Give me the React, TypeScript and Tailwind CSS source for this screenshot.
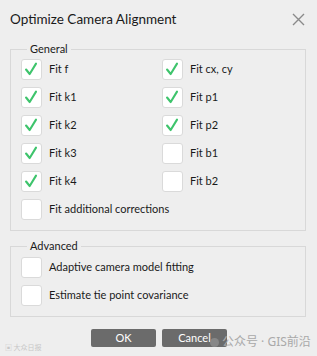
const general: { left: string; right: string; leftOn: boolean; rightOn: boolean }[] = [
  { left: "Fit f", leftOn: true, right: "Fit cx, cy", rightOn: true },
  { left: "Fit k1", leftOn: true, right: "Fit p1", rightOn: true },
  { left: "Fit k2", leftOn: true, right: "Fit p2", rightOn: true },
  { left: "Fit k3", leftOn: true, right: "Fit b1", rightOn: false },
  { left: "Fit k4", leftOn: true, right: "Fit b2", rightOn: false },
];

function Check({ on, label }: { on: boolean; label: string }) {
  return (
    <div className="flex items-center gap-[7px] h-[21px]">
      <div className="w-[21px] h-[21px] shrink-0 rounded-[3px] border border-[#dadada] bg-white flex items-center justify-center">
        {on && (
          <svg width="21" height="21" viewBox="0 0 21 21">
            <polyline
              points="4.5,10.5 8.5,15.5 15.5,4"
              fill="none"
              stroke="#3ec46c"
              strokeWidth="2.3"
              strokeLinecap="round"
              strokeLinejoin="round"
            />
          </svg>
        )}
      </div>
      <span className="text-[11px] text-[#1a1a1a] whitespace-nowrap">{label}</span>
    </div>
  );
}

export default function App() {
  return (
    <div
      className="relative w-[317px] h-[356px] bg-[#eeeeee] overflow-hidden"
      style={{ fontFamily: 'Lato, "Noto Sans", sans-serif' }}
    >
      {/* Title bar */}
      <div className="flex items-center justify-between h-[20px] mt-[9px] pl-[10px] pr-[12px]">
        <span className="text-[13.5px] leading-[20px] text-[#1a1a1a]">Optimize Camera Alignment</span>
        <svg width="13" height="13" viewBox="0 0 13 13">
          <path d="M1 1 L12 12 M12 1 L1 12" stroke="#8a8a8a" strokeWidth="1.4" />
        </svg>
      </div>

      {/* General */}
      <fieldset className="mt-[12px] ml-[10px] w-[296px] border border-[#d8d8d8] pl-[10px] pt-[2px] pb-[10px]">
        <legend className="ml-[6px] px-[3px] text-[11px] leading-[16px] text-[#1a1a1a]">General</legend>
        <div className="grid grid-cols-[141px_1fr] gap-y-[7px]">
          {general.map((r) => (
            <div key={r.left} className="contents">
              <Check on={r.leftOn} label={r.left} />
              <Check on={r.rightOn} label={r.right} />
            </div>
          ))}
          <div className="col-span-2">
            <Check on={false} label="Fit additional corrections" />
          </div>
        </div>
      </fieldset>

      {/* Advanced */}
      <fieldset className="mt-[7px] ml-[10px] w-[296px] border border-[#d8d8d8] pl-[10px] pt-[3px] pb-[10px]">
        <legend className="ml-[6px] px-[3px] text-[11px] leading-[16px] text-[#1a1a1a]">Advanced</legend>
        <div className="flex flex-col gap-[7px]">
          <Check on={false} label="Adaptive camera model fitting" />
          <Check on={false} label="Estimate tie point covariance" />
        </div>
      </fieldset>

      {/* Buttons */}
      <div className="flex justify-center gap-[6px] mt-[12px] pl-[1px]">
        <button className="w-[65px] h-[18px] rounded-[2px] bg-[#6b6b6b] text-white text-[11px] leading-[18px]">OK</button>
        <button className="w-[65px] h-[18px] rounded-[2px] bg-[#6b6b6b] text-white text-[11px] leading-[18px]">Cancel</button>
      </div>

      {/* Watermark */}
      <div className="absolute left-[210px] top-[334px] flex items-center gap-[3px] text-[12px] leading-[16px] text-[#a9a9a9]" style={{ fontFamily: '"Noto Sans", "Noto Sans CJK SC", sans-serif' }}>
        <span className="w-[9px] h-[9px] rounded-full bg-[#8f8f8f] opacity-80" />
        <span>公众号 · GIS前沿</span>
      </div>
      <div className="absolute left-[5px] top-[343px] text-[7px] leading-[8px] text-[#c8c8c8]" style={{ fontFamily: '"Noto Sans CJK SC", sans-serif' }}>
        ▣ 大众日报
      </div>
    </div>
  );
}
